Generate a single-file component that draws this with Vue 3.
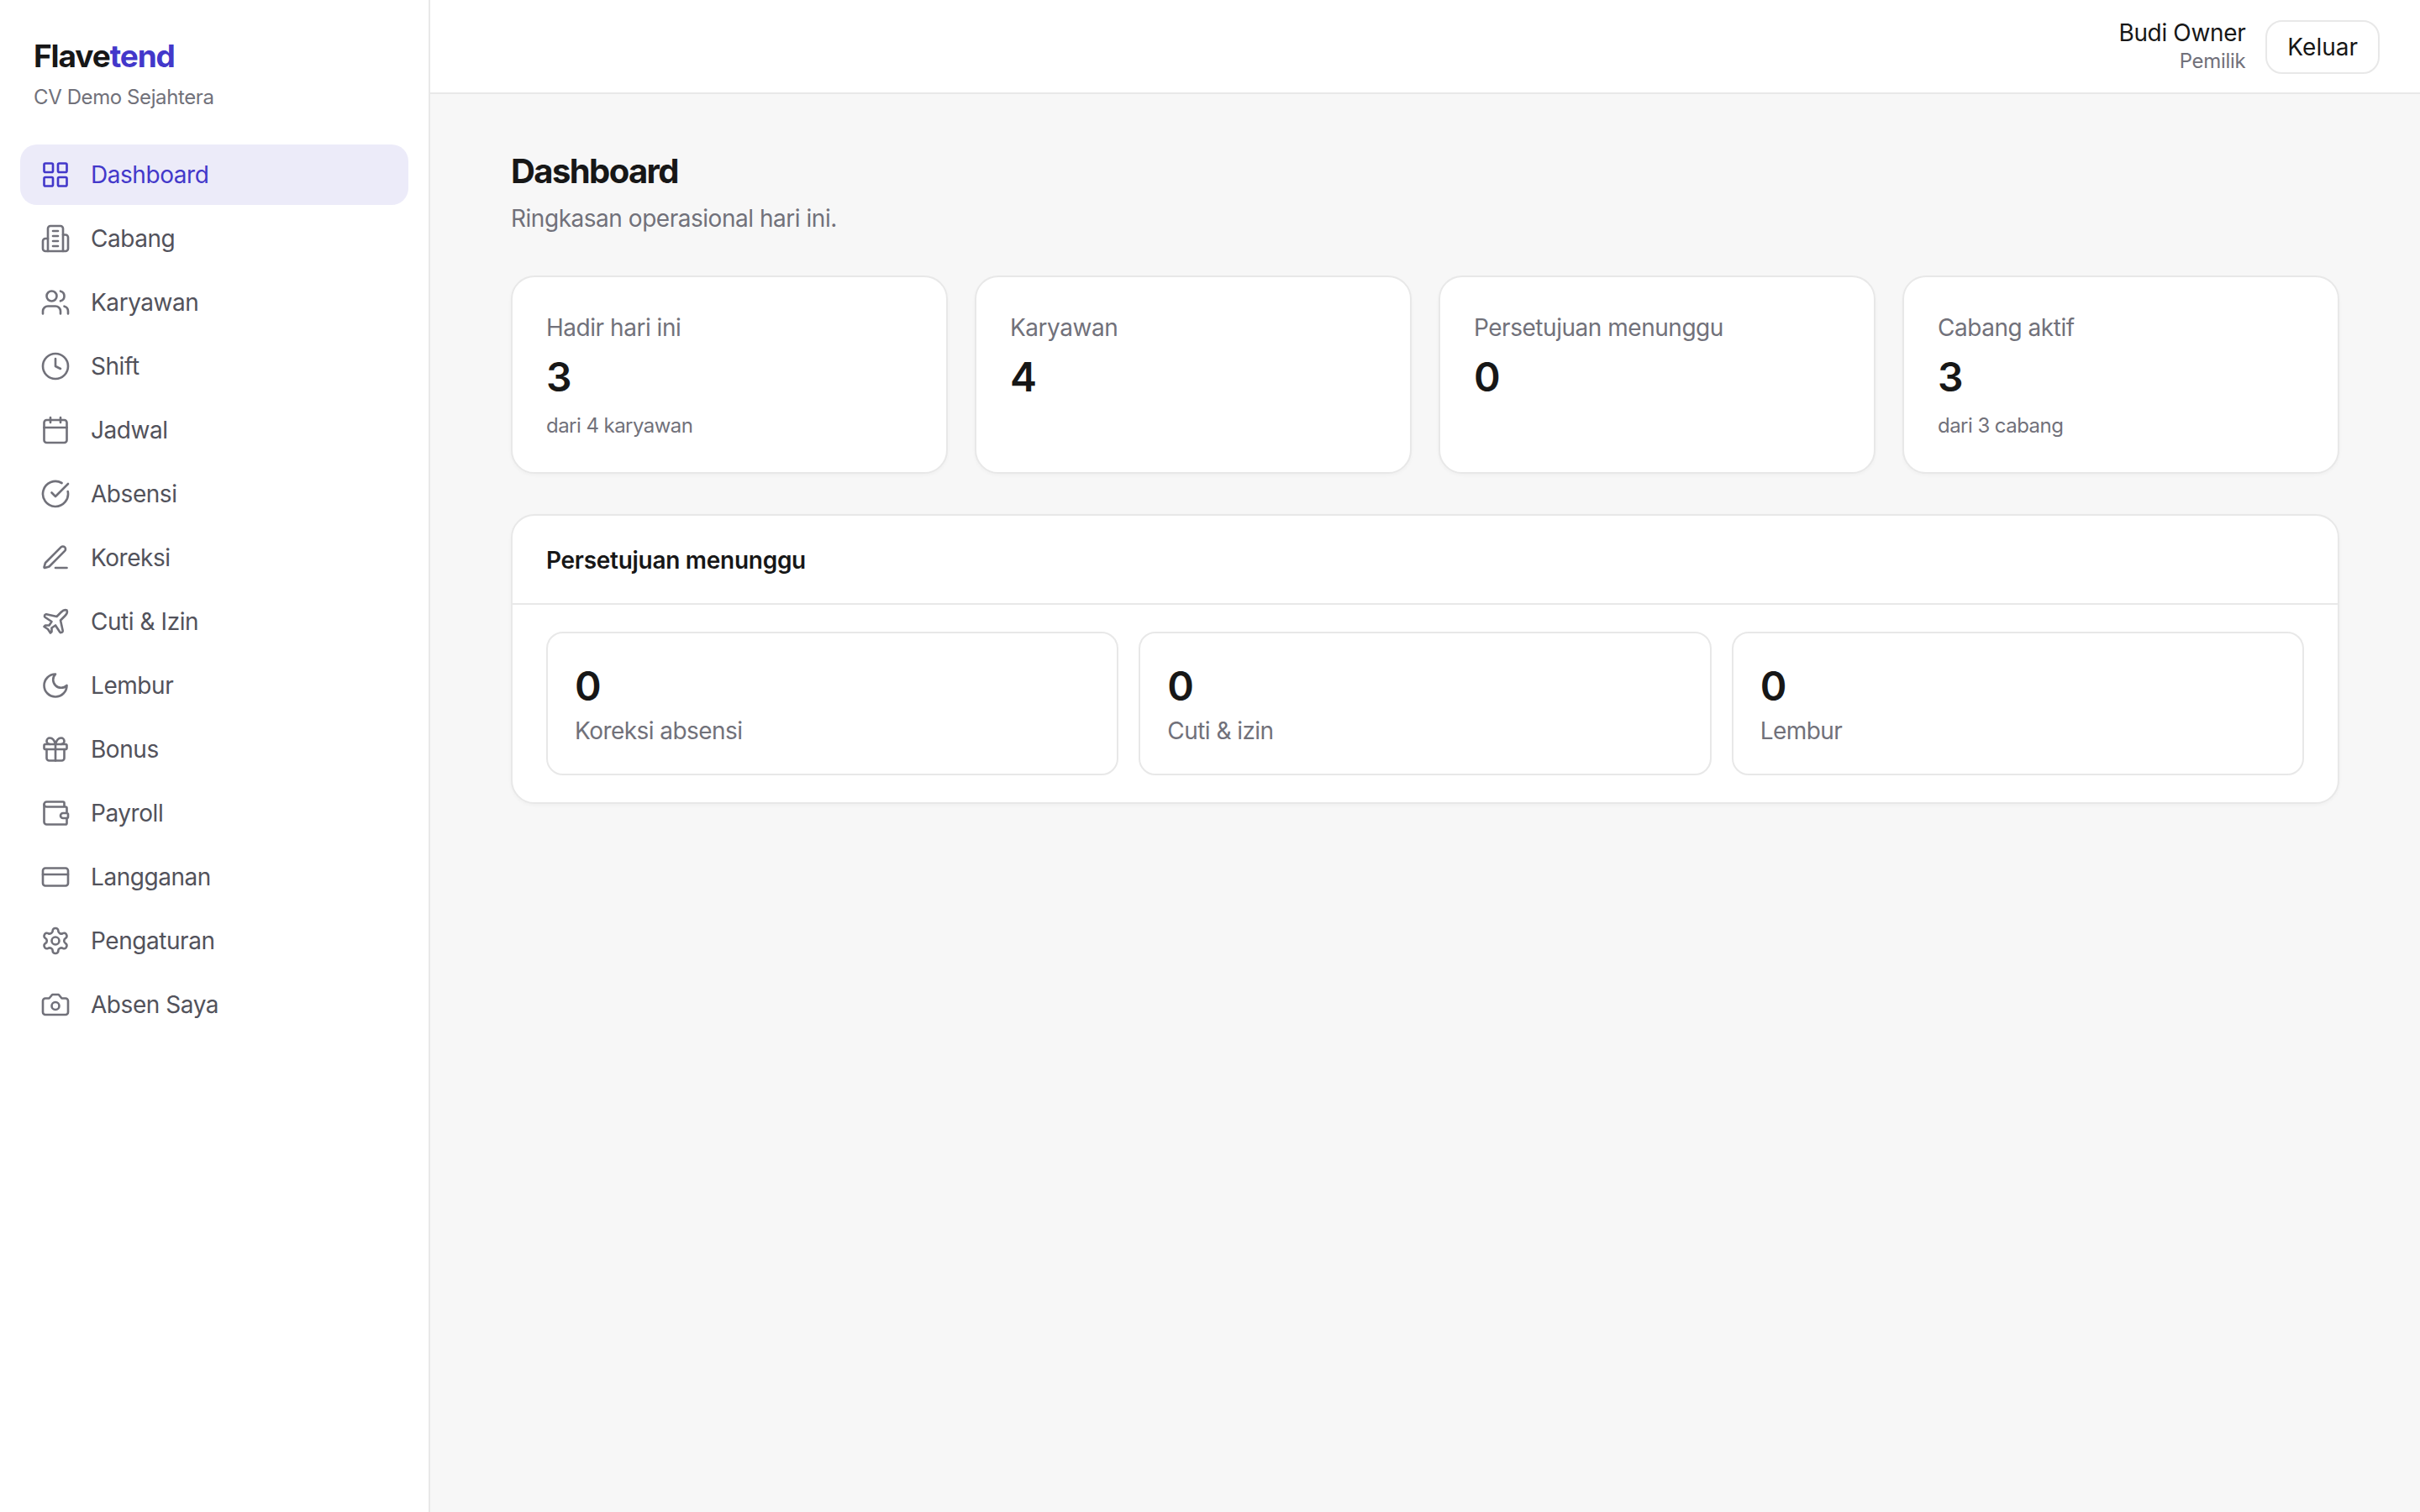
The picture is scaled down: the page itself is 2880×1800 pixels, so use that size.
<script setup>
const navItems = [
  { label: 'Dashboard', active: true, rects: [[3, 3, 7, 7, 1], [14, 3, 7, 7, 1], [14, 14, 7, 7, 1], [3, 14, 7, 7, 1]] },
  { label: 'Cabang', paths: ['M6 22V4a2 2 0 0 1 2-2h8a2 2 0 0 1 2 2v18Z', 'M6 12H4a2 2 0 0 0-2 2v6a2 2 0 0 0 2 2h2', 'M18 9h2a2 2 0 0 1 2 2v9a2 2 0 0 1-2 2h-2', 'M10 6h4', 'M10 10h4', 'M10 14h4', 'M10 18h4'] },
  { label: 'Karyawan', paths: ['M16 21v-2a4 4 0 0 0-4-4H6a4 4 0 0 0-4 4v2', 'M16 3.13a4 4 0 0 1 0 7.75', 'M22 21v-2a4 4 0 0 0-3-3.87'], circles: [[9, 7, 4]] },
  { label: 'Shift', paths: ['M12 6v6l4 2'], circles: [[12, 12, 10]] },
  { label: 'Jadwal', paths: ['M8 2v4', 'M16 2v4', 'M3 10h18'], rects: [[3, 4, 18, 18, 2]] },
  { label: 'Absensi', paths: ['M21.801 10A10 10 0 1 1 17 3.335', 'm9 11 3 3L22 4'] },
  { label: 'Koreksi', paths: ['M12 20h9', 'M16.376 3.622a1 1 0 0 1 3.002 3.002L7.368 18.635a2 2 0 0 1-.855.506l-2.872.838a.5.5 0 0 1-.62-.62l.838-2.872a2 2 0 0 1 .506-.854z'] },
  { label: 'Cuti & Izin', paths: ['M17.8 19.2 16 11l3.5-3.5C21 6 21.5 4 21 3c-1-.5-3 0-4.5 1.5L13 8 4.8 6.2c-.5-.1-.9.1-1.1.5l-.3.5c-.2.5-.1 1 .3 1.3L9 12l-2 3H4l-1 1 3 2 2 3 1-1v-3l3-2 3.5 5.3c.3.4.8.5 1.3.3l.5-.2c.4-.3.6-.7.5-1.2z'] },
  { label: 'Lembur', paths: ['M12 3a6 6 0 0 0 9 9 9 9 0 1 1-9-9Z'] },
  { label: 'Bonus', paths: ['M12 8v13', 'M19 12v7a2 2 0 0 1-2 2H7a2 2 0 0 1-2-2v-7', 'M7.5 8a2.5 2.5 0 0 1 0-5A4.8 8 0 0 1 12 8a4.8 8 0 0 1 4.5-5 2.5 2.5 0 0 1 0 5'], rects: [[3, 8, 18, 4, 1]] },
  { label: 'Payroll', paths: ['M19 7V4a1 1 0 0 0-1-1H5a2 2 0 0 0 0 4h15a1 1 0 0 1 1 1v4h-3a2 2 0 0 0 0 4h3a1 1 0 0 0 1-1v-2a1 1 0 0 0-1-1', 'M3 5v14a2 2 0 0 0 2 2h15a1 1 0 0 0 1-1v-4'] },
  { label: 'Langganan', paths: ['M2 10h20'], rects: [[2, 5, 20, 14, 2]] },
  { label: 'Pengaturan', paths: ['M12.22 2h-.44a2 2 0 0 0-2 2v.18a2 2 0 0 1-1 1.73l-.43.25a2 2 0 0 1-2 0l-.15-.08a2 2 0 0 0-2.73.73l-.22.38a2 2 0 0 0 .73 2.73l.15.1a2 2 0 0 1 1 1.72v.51a2 2 0 0 1-1 1.74l-.15.09a2 2 0 0 0-.73 2.73l.22.38a2 2 0 0 0 2.73.73l.15-.08a2 2 0 0 1 2 0l.43.25a2 2 0 0 1 1 1.73V20a2 2 0 0 0 2 2h.44a2 2 0 0 0 2-2v-.18a2 2 0 0 1 1-1.73l.43-.25a2 2 0 0 1 2 0l.15.08a2 2 0 0 0 2.73-.73l.22-.39a2 2 0 0 0-.73-2.73l-.15-.08a2 2 0 0 1-1-1.74v-.5a2 2 0 0 1 1-1.74l.15-.09a2 2 0 0 0 .73-2.73l-.22-.38a2 2 0 0 0-2.73-.73l-.15.08a2 2 0 0 1-2 0l-.43-.25a2 2 0 0 1-1-1.73V4a2 2 0 0 0-2-2z'], circles: [[12, 12, 3]] },
  { label: 'Absen Saya', paths: ['M14.5 4h-5L7 7H4a2 2 0 0 0-2 2v9a2 2 0 0 0 2 2h16a2 2 0 0 0 2-2V9a2 2 0 0 0-2-2h-3l-2.5-3z'], circles: [[12, 13, 3]] }
]

const stats = [
  { label: 'Hadir hari ini', value: 3, note: 'dari 4 karyawan' },
  { label: 'Karyawan', value: 4 },
  { label: 'Persetujuan menunggu', value: 0 },
  { label: 'Cabang aktif', value: 3, note: 'dari 3 cabang' }
]

const approvals = [
  { label: 'Koreksi absensi', value: 0 },
  { label: 'Cuti & izin', value: 0 },
  { label: 'Lembur', value: 0 }
]
</script>

<template>
  <div class="layout">
    <aside class="sidebar">
      <div class="brand">
        <div class="logo">Flave<span class="logo-accent">tend</span></div>
        <div class="company">CV Demo Sejahtera</div>
      </div>
      <nav class="nav">
        <a v-for="item in navItems" :key="item.label" class="nav-item" :class="{ active: item.active }">
          <svg class="nav-icon" viewBox="0 0 24 24" fill="none" stroke="currentColor" stroke-width="1.75" stroke-linecap="round" stroke-linejoin="round">
            <rect v-for="(r, i) in item.rects" :key="'r' + i" :x="r[0]" :y="r[1]" :width="r[2]" :height="r[3]" :rx="r[4]" />
            <circle v-for="(c, i) in item.circles" :key="'c' + i" :cx="c[0]" :cy="c[1]" :r="c[2]" />
            <path v-for="(d, i) in item.paths" :key="'p' + i" :d="d" />
          </svg>
          <span>{{ item.label }}</span>
        </a>
      </nav>
    </aside>

    <div class="content">
      <header class="topbar">
        <div class="user">
          <div class="user-name">Budi Owner</div>
          <div class="user-role">Pemilik</div>
        </div>
        <button class="logout">Keluar</button>
      </header>

      <main class="main">
        <h1 class="title">Dashboard</h1>
        <p class="subtitle">Ringkasan operasional hari ini.</p>

        <div class="stats">
          <div v-for="stat in stats" :key="stat.label" class="stat-card">
            <div class="stat-label">{{ stat.label }}</div>
            <div class="stat-value">{{ stat.value }}</div>
            <div v-if="stat.note" class="stat-note">{{ stat.note }}</div>
          </div>
        </div>

        <section class="panel">
          <h2 class="panel-title">Persetujuan menunggu</h2>
          <div class="panel-body">
            <div v-for="row in approvals" :key="row.label" class="approval">
              <div class="approval-value">{{ row.value }}</div>
              <div class="approval-label">{{ row.label }}</div>
            </div>
          </div>
        </section>
      </main>
    </div>
  </div>
</template>

<style scoped>
.layout {
  display: flex;
  min-height: 1800px;
  font-family: Inter, "Liberation Sans", sans-serif;
  color: #171717;
  background-color: #f7f7f7;
}

/* sidebar */
.sidebar {
  flex: none;
  box-sizing: border-box;
  width: 512px;
  padding: 0 24px;
  background-color: #fff;
  border-right: 2px solid #e8e8e8;
}

.brand {
  height: 172px;
  padding: 44px 16px 0;
  box-sizing: border-box;
}

.logo {
  font-size: 37px;
  line-height: 46px;
  font-weight: 700;
  letter-spacing: -1.1px;
}

.logo-accent {
  color: #4338ca;
}

.company {
  margin-top: 10px;
  font-size: 24px;
  line-height: 32px;
  letter-spacing: -0.4px;
  color: #71717a;
}

.nav {
  display: flex;
  flex-direction: column;
  gap: 4px;
}

.nav-item {
  display: flex;
  align-items: center;
  gap: 24px;
  height: 72px;
  padding: 0 24px;
  border-radius: 20px;
  font-size: 28px;
  letter-spacing: -0.45px;
  color: #52525b;
}

.nav-item.active {
  background-color: #ecebf9;
  color: #4338ca;
}

.nav-icon {
  flex: none;
  width: 36px;
  height: 36px;
  color: #71717a;
}

.active .nav-icon {
  color: #4338ca;
}

/* topbar */
.content {
  flex: 1;
  min-width: 0;
}

.topbar {
  display: flex;
  align-items: center;
  justify-content: flex-end;
  gap: 24px;
  box-sizing: border-box;
  height: 112px;
  padding: 0 48px;
  background-color: #fff;
  border-bottom: 2px solid #e8e8e8;
}

.user {
  text-align: right;
}

.user-name {
  font-size: 28px;
  line-height: 36px;
  letter-spacing: -0.35px;
}

.user-role {
  font-size: 24px;
  line-height: 32px;
  letter-spacing: -0.3px;
  color: #71717a;
}

.logout {
  box-sizing: border-box;
  height: 64px;
  margin-top: 2px;
  padding: 0 24px;
  font: inherit;
  font-size: 28px;
  color: #171717;
  background-color: #fff;
  border: 2px solid #e8e8e8;
  border-radius: 20px;
}

/* main */
.main {
  padding: 64px 96px;
}

.title {
  margin: 0;
  font-size: 40px;
  line-height: 56px;
  font-weight: 700;
  letter-spacing: -1.6px;
}

.subtitle {
  margin: 8px 0 0;
  font-size: 28px;
  line-height: 40px;
  letter-spacing: -0.47px;
  color: #71717a;
}

.stats {
  display: grid;
  grid-template-columns: repeat(4, 1fr);
  gap: 32px;
  margin-top: 48px;
}

.stat-card {
  box-sizing: border-box;
  height: 236px;
  padding: 40px;
  background-color: #fff;
  border: 2px solid #e8e8e8;
  border-radius: 28px;
  box-shadow: 0 2px 4px rgba(0, 0, 0, 0.03);
}

.stat-label {
  font-size: 28px;
  line-height: 40px;
  letter-spacing: -0.47px;
  color: #71717a;
}

.stat-value {
  margin-top: 9px;
  font-size: 48px;
  line-height: 60px;
  font-weight: 600;
}

.stat-note {
  margin-top: 12px;
  font-size: 24px;
  line-height: 32px;
  letter-spacing: -0.55px;
  color: #71717a;
}

.panel {
  margin-top: 48px;
  background-color: #fff;
  border: 2px solid #e8e8e8;
  border-radius: 28px;
  box-shadow: 0 2px 4px rgba(0, 0, 0, 0.03);
}

.panel-title {
  margin: 0;
  padding: 33px 40px 31px;
  font-size: 28px;
  line-height: 40px;
  font-weight: 600;
  letter-spacing: -0.28px;
  border-bottom: 2px solid #e8e8e8;
}

.panel-body {
  display: grid;
  grid-template-columns: repeat(3, 1fr);
  gap: 24px;
  padding: 32px 40px;
}

.approval {
  padding: 33px 32px 31px;
  border: 2px solid #e8e8e8;
  border-radius: 20px;
}

.approval-value {
  font-size: 48px;
  line-height: 60px;
  font-weight: 600;
}

.approval-label {
  margin-top: 3px;
  font-size: 28px;
  line-height: 40px;
  letter-spacing: -0.55px;
  color: #71717a;
}
</style>

<style>
html,
body {
  margin: 0;
  background-color: #f7f7f7;
}
</style>
